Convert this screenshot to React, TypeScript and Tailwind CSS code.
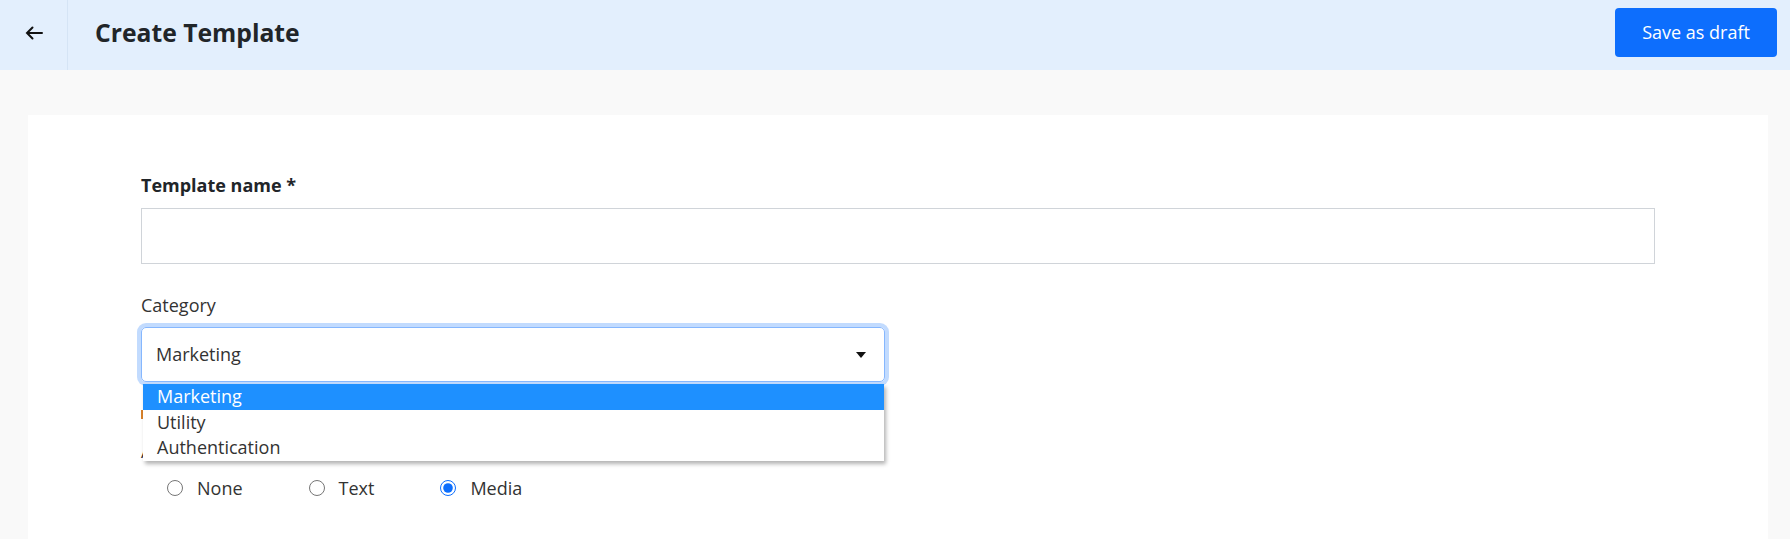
import { useState } from 'react';

const categories = ['Marketing', 'Utility', 'Authentication'];
const headerTypes = ['None', 'Text', 'Media'];

export default function App() {
  const [category] = useState('Marketing');
  const [headerType, setHeaderType] = useState('Media');

  return (
    <div className="min-h-[539px] bg-[#f9f9f9] font-['Open_Sans',sans-serif] text-[#212529]">
      {/* Top bar */}
      <header className="flex h-[70px] items-center bg-[#e3effd]">
        <button className="flex h-full w-[68px] items-center justify-center border-r border-[#d5e4f5]">
          <svg className="mb-[5px]" width="18" height="14" viewBox="0 0 18 14" fill="none" stroke="#111" strokeWidth="2" strokeLinecap="round">
            <path d="M17 7H2M7.5 1.5 2 7l5.5 5.5" />
          </svg>
        </button>
        <h1 className="mb-[5px] pl-[27px] text-[24.7px] font-bold text-[#212529]">Create Template</h1>
        <button className="mb-[5px] ml-auto mr-[13px] h-[49px] w-[162px] rounded-[4px] bg-[#0d6efd] text-[18px] text-white">
          Save as draft
        </button>
      </header>

      {/* Form card */}
      <main className="ml-[28px] mr-[22px] pt-[45px]">
        <div className="bg-white px-[113px] pb-[80px] pt-[58px]">
          <label className="block text-[18px] font-bold leading-[24px]">Template name *</label>
          <input className="mt-[11px] block h-[56px] w-full border border-[#d0d4d9] px-4 outline-none" />

          <label className="mt-[29px] block text-[18px] leading-[24px] text-[#333]">Category</label>
          <div className="relative mt-[10px] w-[744px]">
            <div className="flex h-[55px] items-center justify-between rounded-[5px] border border-[#86b7fe] pl-[14px] pr-[18px] text-[18px] text-[#333] shadow-[0_0_0_4px_rgba(13,110,253,0.25)]">
              <span>{category}</span>
              <svg width="10" height="6" viewBox="0 0 10 6">
                <path d="M0 0h10L5 6z" fill="#111" />
              </svg>
            </div>

            <ul className="absolute left-[2px] right-[1px] top-[57px] z-10 bg-white shadow-[2px_3px_4px_rgba(0,0,0,0.3)]">
              {categories.map((c) => (
                <li
                  key={c}
                  className={`h-[25.6px] pl-[14px] text-[18px] leading-[25.6px] ${
                    c === category ? 'bg-[#1e90ff] text-white' : 'text-[#333]'
                  }`}
                >
                  {c}
                </li>
              ))}
            </ul>
          </div>

          {/* Header section, hidden under the open list */}
          <div className="mt-[20px] flex h-[24px] items-center">
            <span className="h-[9px] w-[10px] bg-[#d9822b]" />
          </div>
          <label className="mt-[13px] block text-[18px] leading-[24px] text-[#333]">Add a header</label>

          <div className="mt-[13px] flex items-center gap-[66px] pl-[26px]">
            {headerTypes.map((t) => (
              <label key={t} className="flex items-center gap-[14px] text-[18px] leading-[24px] text-[#333]">
                <input
                  type="radio"
                  name="headerType"
                  checked={headerType === t}
                  onChange={() => setHeaderType(t)}
                  className="m-0 h-4 w-4 accent-[#0d6efd]"
                />
                {t}
              </label>
            ))}
          </div>
        </div>
      </main>
    </div>
  );
}
